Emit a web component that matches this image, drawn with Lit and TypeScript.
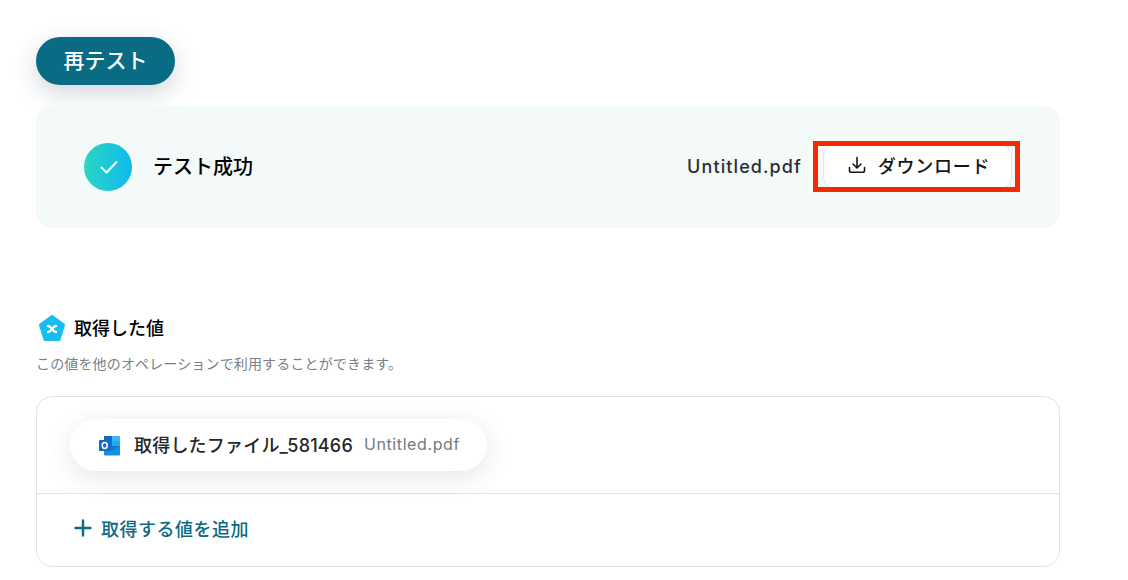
import { LitElement, html, css } from "lit";
import { customElement } from "lit/decorators.js";

@customElement("app-root")
export class AppRoot extends LitElement {
  static styles = css`
    :host {
      display: block;
      width: 1128px;
      height: 580px;
      overflow: hidden;
      background: #fff;
      font-family: Inter, "Noto Sans CJK JP", sans-serif;
      color: #000;
    }

    .page {
      width: 1024px;
      margin-left: 36px;
      padding-top: 37px;
    }

    .retest {
      display: flex;
      align-items: center;
      justify-content: center;
      width: 139px;
      height: 48px;
      padding-bottom: 4px;
      box-sizing: border-box;
      border-radius: 24px;
      background: #0a6b85;
      color: #fff;
      font-size: 21px;
      font-weight: 500;
      box-shadow: 0 8px 24px rgba(30, 50, 70, 0.2);
    }

    .result {
      display: flex;
      align-items: center;
      height: 122px;
      margin-top: 21px;
      padding: 0 40px 0 48px;
      box-sizing: border-box;
      border-radius: 16px;
      background: #f4f9f9;
    }

    .check {
      display: flex;
      align-items: center;
      justify-content: center;
      width: 48px;
      height: 48px;
      padding-left: 2px;
      box-sizing: border-box;
      border-radius: 50%;
      background: linear-gradient(90deg, #2ad6c2, #10b9ee);
    }

    .status {
      flex: 1;
      margin-left: 21px;
      padding-bottom: 3px;
      font-size: 20px;
      font-weight: 500;
    }

    .file {
      padding-bottom: 1px;
      font-size: 18px;
      font-weight: 500;
      color: #2b2f33;
      letter-spacing: 1.1px;
    }

    .outline {
      display: flex;
      align-items: stretch;
      width: 207px;
      height: 51px;
      margin: 0 0 1px 11px;
      padding: 0 3px 0 5px;
      box-sizing: border-box;
      border: 5px solid #f52a00;
      overflow: hidden;
    }

    .download {
      flex: 1;
      display: flex;
      align-items: center;
      justify-content: center;
      gap: 12px;
      margin: -2px 0;
      padding: 0 0 3px 3px;
      box-sizing: border-box;
      border: 1px solid #e4e6e8;
      border-radius: 12px;
      background: #fff;
      font-size: 18px;
      font-weight: 500;
      letter-spacing: 0.75px;
      color: #14171a;
    }

    .heading {
      display: flex;
      align-items: center;
      gap: 8px;
      margin-top: 85px;
      height: 28px;
      font-size: 18px;
      font-weight: 500;
    }

    .hint {
      margin-top: 13px;
      height: 20px;
      line-height: 20px;
      font-size: 14px;
      letter-spacing: 0.15px;
      color: #7a7f85;
    }

    .values {
      margin-top: 22px;
      height: 171px;
      box-sizing: border-box;
      border: 1px solid #e2e4e6;
      border-radius: 16px;
    }

    .chips {
      height: 97px;
      padding: 22px 0 0 33px;
      box-sizing: border-box;
      border-bottom: 1px solid #e2e4e6;
    }

    .chip {
      display: inline-flex;
      align-items: center;
      height: 52px;
      padding: 0 27px 0 29px;
      box-sizing: border-box;
      border-radius: 26px;
      background: #fff;
      box-shadow: 0 6px 24px rgba(30, 50, 70, 0.12);
    }

    .chip-name {
      margin: 0 0 2px 13px;
      font-size: 18px;
      font-weight: 500;
      letter-spacing: 0.2px;
      color: #25282b;
    }

    .chip-file {
      margin: 0 0 2px 11px;
      font-size: 16px;
      color: #74797e;
      letter-spacing: 0.6px;
    }

    .add {
      display: flex;
      align-items: center;
      gap: 9px;
      height: 71px;
      padding: 0 0 4px 37px;
      box-sizing: border-box;
      font-size: 18px;
      font-weight: 500;
      letter-spacing: 0.5px;
      color: #0a6b85;
    }
  `;

  render() {
    return html`<div class="page">
      <div class="retest">再テスト</div>

      <div class="result">
        <div class="check">
          <svg width="20" height="20" viewBox="0 0 20 20" fill="none">
            <path d="M2.5 10.500l5 5 10-10.500" stroke="#fff" stroke-width="2" stroke-linecap="round" stroke-linejoin="round" />
          </svg>
        </div>
        <div class="status">テスト成功</div>
        <div class="file">Untitled.pdf</div>
        <div class="outline">
          <div class="download">
            <svg width="18" height="18" viewBox="0 0 18 18" fill="none" stroke="#14171a" stroke-width="1.6" stroke-linecap="round" stroke-linejoin="round">
              <path d="M9 1.500v10M5 8l4 3.800L13 8M1.500 11.500v3.200a1.600 1.600 0 0 0 1.600 1.600h11.800a1.600 1.600 0 0 0 1.600-1.600v-3.200" />
            </svg>
            ダウンロード
          </div>
        </div>
      </div>

      <div class="heading">
        <svg width="30" height="28" viewBox="0 0 30 28">
          <path d="M16 3.500l11.500 8.500-4.500 14.500H9L4.500 12z" fill="#17bdee" stroke="#17bdee" stroke-width="3" stroke-linejoin="round" />
          <path d="M12 13c2 0 2.500 1 4 3s2 3 4 3M12 19c2 0 2.500-1 4-3s2-3 4-3" fill="none" stroke="#fff" stroke-width="2.400" stroke-linecap="round" />
        </svg>
        取得した値
      </div>
      <div class="hint">この値を他のオペレーションで利用することができます。</div>

      <div class="values">
        <div class="chips">
          <div class="chip">
            <svg width="22" height="21" viewBox="0 0 22 21">
              <path d="M5 1h16v15H5z" fill="#0f78d4" />
              <path d="M5 1h8v5H5z" fill="#0f6cbd" />
              <path d="M13 1h8v5h-8z" fill="#3db5f0" />
              <path d="M13 6h8v5h-8z" fill="#28a8ea" />
              <path d="M5 6h8v5H5z" fill="#0078d4" />
              <path d="M5 11l8 5 8-5v8.500a1 1 0 0 1-1 1H6a1 1 0 0 1-1-1z" fill="#1490df" />
              <path d="M1 5h9.500a1 1 0 0 1 1 1v9a1 1 0 0 1-1 1H1a1 1 0 0 1-1-1V6a1 1 0 0 1 1-1z" fill="#0f6cc4" />
              <ellipse cx="5.700" cy="10.500" rx="2.500" ry="2.900" fill="none" stroke="#fff" stroke-width="1.500" />
            </svg>
            <span class="chip-name">取得したファイル_581466</span>
            <span class="chip-file">Untitled.pdf</span>
          </div>
        </div>
        <div class="add">
          <svg width="18" height="18" viewBox="0 0 18 18" fill="none" stroke="#0a6b85" stroke-width="2.400" stroke-linecap="round">
            <path d="M9 1.500v15M1.500 9h15" />
          </svg>
          取得する値を追加
        </div>
      </div>
    </div>`;
  }
}
